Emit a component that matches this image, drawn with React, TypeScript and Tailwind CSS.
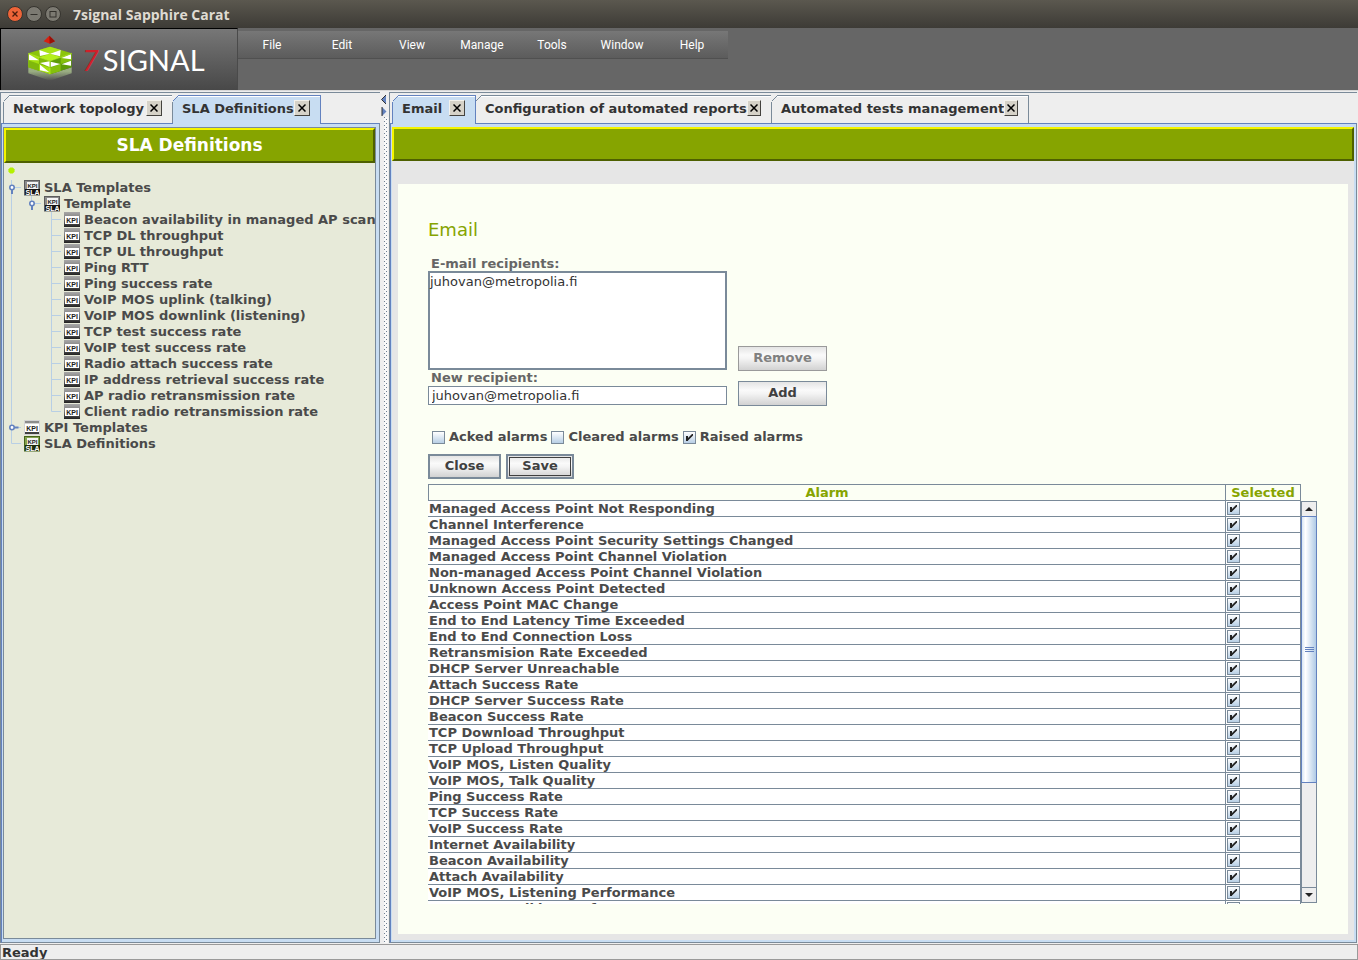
import { useState } from "react";
import type { ReactNode } from "react";

const KPI_NAMES = [
  "Beacon availability in managed AP scan",
  "TCP DL throughput",
  "TCP UL throughput",
  "Ping RTT",
  "Ping success rate",
  "VoIP MOS uplink (talking)",
  "VoIP MOS downlink (listening)",
  "TCP test success rate",
  "VoIP test success rate",
  "Radio attach success rate",
  "IP address retrieval success rate",
  "AP radio retransmission rate",
  "Client radio retransmission rate",
];

const ALARMS = [
  "Managed Access Point Not Responding",
  "Channel Interference",
  "Managed Access Point Security Settings Changed",
  "Managed Access Point Channel Violation",
  "Non-managed Access Point Channel Violation",
  "Unknown Access Point Detected",
  "Access Point MAC Change",
  "End to End Latency Time Exceeded",
  "End to End Connection Loss",
  "Retransmision Rate Exceeded",
  "DHCP Server Unreachable",
  "Attach Success Rate",
  "DHCP Server Success Rate",
  "Beacon Success Rate",
  "TCP Download Throughput",
  "TCP Upload Throughput",
  "VoIP MOS, Listen Quality",
  "VoIP MOS, Talk Quality",
  "Ping Success Rate",
  "TCP Success Rate",
  "VoIP Success Rate",
  "Internet Availability",
  "Beacon Availability",
  "Attach Availability",
  "VoIP MOS, Listening Performance",
  "VoIP MOS, Talking Performance",
];

const MENUS = ["File", "Edit", "View", "Manage", "Tools", "Window", "Help"];

export default function App() {
  return (
    <div className="flex h-screen flex-col overflow-hidden bg-[#eeeeee] font-['DejaVu_Sans',sans-serif] text-[13px] leading-4 font-bold text-[#333333]">
      <TitleBar />
      <Header />
      <div className="flex min-h-0 flex-1 border-t border-[#d8d8d8] pt-px">
        <LeftPane />
        <Splitter />
        <RightPane />
      </div>
      <footer className="mt-px h-[16px] overflow-hidden border border-[#9a9a9a] bg-[#eeeeee] pl-px text-[13px] leading-4">
        Ready
      </footer>
    </div>
  );
}

function TitleBar() {
  return (
    <div className="flex h-7 shrink-0 items-center bg-linear-to-b from-[#5b584f] to-[#3d3b36] pl-[7px]">
      <div className="flex gap-[3px]">
        <WindowButton label="Close window" kind="close" />
        <WindowButton label="Minimize window" kind="min" />
        <WindowButton label="Maximize window" kind="max" />
      </div>
      <span className="ml-3 pt-px font-['Open_Sans',sans-serif] text-[14px] text-[#dfdbd2]">7signal Sapphire Carat</span>
    </div>
  );
}

function WindowButton({ label, kind }: { label: string; kind: "close" | "min" | "max" }) {
  return (
    <button aria-label={label} className="size-4">
      <svg viewBox="0 0 16 16" className="size-4" fill="none">
        <circle cx="8" cy="8" r="7.5" fill={kind === "close" ? "#ee6438" : "#7c7a72"} stroke="#35332e" />
        {kind === "close" && <path d="M5.500 5.500l5 5M10.500 5.500l-5 5" stroke="#4a1c0c" strokeWidth="1.300" />}
        {kind === "min" && <path d="M4.500 8.500h7" stroke="#33312c" />}
        {kind === "max" && <rect x="5" y="5.500" width="6" height="5.500" stroke="#33312c" />}
      </svg>
    </button>
  );
}

function Header() {
  return (
    <header className="flex h-[62px] shrink-0 bg-[#666666]">
      <div className="flex w-[238px] items-start border-t border-l border-r border-t-black border-l-black border-r-[#4a4a4a] bg-linear-to-b from-[#777777] to-[#484848] pt-[6px] pl-[26px]">
        <LogoCube />
        <div className="ml-[9px] flex items-baseline pt-[11px] font-['Lato',sans-serif] text-[29px] leading-7 font-normal">
          <span className="text-[#d0202a] italic">7</span>
          <span className="ml-1 text-white">SIGNAL</span>
        </div>
      </div>
      <nav className="mt-[3px] flex h-7 w-[490px] border-b border-[#505050] bg-linear-to-b from-[#777777] to-[#5c5c5c]">
        {MENUS.map((menu) => (
          <button key={menu} className="flex-1 pr-[2px] font-['Roboto',sans-serif] text-[12px] leading-4 font-normal text-white">
            {menu}
          </button>
        ))}
      </nav>
    </header>
  );
}

function LogoCube() {
  return (
    <svg viewBox="21 15 138 138" className="size-[46px]">
      <defs>
        <linearGradient id="glow" x1="0" y1="0" x2="0" y2="1">
          <stop offset="0.300" stopColor="#c8e8a0" stopOpacity="0.6" />
          <stop offset="1" stopColor="#c8e8a0" stopOpacity="0" />
        </linearGradient>
      </defs>
      <path d="M25 112L90 133L155 112V130L90 152L25 130Z" fill="url(#glow)" />
      <path d="M88 17L105 34L89 41L71 34Z" fill="#d82010" />
      <path d="M88 17L105 34L89 41Z" fill="#981008" />
      {/* top face */}
      <path d="M90 50L155 70L90 93L25 70Z" fill="#8cc40c" />
      <path d="M90 50L122 60L90 71L58 60Z" fill="#a8e414" />
      <path d="M90 71L122 82L90 93L58 82Z" fill="#b4f01c" />
      <path d="M58 60L90 71L60 78Z M122 60L90 71L120 79Z" fill="#ffffff" />
      {/* left face */}
      <path d="M25 70L90 93V133L25 112Z" fill="#a4e010" />
      <path d="M57 81L90 93V113L57 102Z M25 91L57 102V123L25 112Z" fill="#80b80c" />
      <path d="M27 73L57 91L27 90Z M60 99L89 94V111Z M60 104L88 127L60 121Z" fill="#ffffff" />
      {/* right face */}
      <path d="M155 70L90 93V133L155 112Z" fill="#5e9c08" />
      <path d="M122 82L155 70V91L122 102Z M90 113L122 102V123L90 133Z" fill="#84c00c" />
      <path d="M92 95L121 102L92 111Z M124 84L153 73V88Z M125 103L153 92V107Z" fill="#ffffff" />
      <path d="M25 70L90 93L155 70M90 93V133" fill="none" stroke="#b8f028" strokeWidth="2" />
    </svg>
  );
}

function Tab({ title, width, active = false, first = false }: { title: string; width: string; active?: boolean; first?: boolean }) {
  const line = active ? "#6382bf" : "#7a8a99";
  return (
    <div
      className={`relative flex shrink-0 items-center justify-between border-t border-r pr-[10px] pl-[9px] ${width} ${first ? "border-l" : ""} ${
        active ? "z-10 -mb-px h-[29px] border-[#6382bf] bg-[#c8ddf2] pb-[4px] inset-shadow-[0_1px_0_#ffffff]" : "h-[28px] border-[#7a8a99] bg-[#eeeeee] pb-[3px] inset-shadow-[0_1px_0_#ffffff]"
      }`}
    >
      {/* cut corner */}
      <svg viewBox="0 0 7 7" className="absolute -top-px -left-px size-[7px]" shapeRendering="crispEdges">
        <path d="M0 0H7L0 7Z" fill="#eeeeee" />
        <path d="M0.500 6.500L6.500 0.500" stroke={line} />
      </svg>
      <button className="pt-[2px] whitespace-nowrap">{title}</button>
      <button aria-label={`Close ${title}`} className="flex size-4 items-center justify-center border border-t-[#f4f2ec] border-l-[#f4f2ec] border-r-[#44423e] border-b-[#44423e] bg-[#d6d2c8]">
        <svg viewBox="0 0 8 8" className="size-2" stroke="#000000" strokeWidth="1.500">
          <path d="M0.500 0.500L7.500 7.500M7.500 0.500L0.500 7.500" />
        </svg>
      </button>
    </div>
  );
}

function Banner({ height, children }: { height: string; children?: ReactNode }) {
  return (
    <div className={`${height} shrink-0 border-2 border-t-[#f4f400] border-l-[#f4f400] border-r-[#4e6000] border-b-[#4e6000] bg-[#86a400] text-center text-[17px] leading-[30px] text-white`}>
      {children}
    </div>
  );
}

function LeftPane() {
  return (
    <section className="flex w-[380px] shrink-0 flex-col border-t border-l border-[#7a8a99]">
      <div className="flex shrink-0 pt-[2px] pl-[2px]">
        <Tab title="Network topology" width="w-[170px]" first />
        <Tab title="SLA Definitions" width="w-[148px]" active />
      </div>
      <div className="flex min-h-0 flex-1 flex-col border border-t-[#6382bf] border-l-[#6382bf] border-r-[#7a8a99] border-b-[#7a8a99] bg-[#c8ddf2] pt-[3px] pr-[3px] pb-[3px] pl-px">
        <div className="flex min-h-0 flex-1 flex-col border border-[#7a8a99] bg-[#e7ead9]">
          <Banner height="h-[35px]">SLA Definitions</Banner>
          <Tree />
        </div>
      </div>
    </section>
  );
}

function TreeRow({ label, icon, guide }: { label: string; icon: "kpi" | "sla" | "slaGreen" | "kpiLight"; guide: ReactNode }) {
  return (
    <li className="flex h-4 items-center text-[#4a4a4a]">
      {guide}
      <KpiIcon kind={icon} />
      <span className="ml-1 whitespace-nowrap">{label}</span>
    </li>
  );
}

function Tree() {
  return (
    <div className="flex-1 overflow-hidden pt-1">
      <svg viewBox="0 0 8 8" className="ml-1 size-[7px]">
        <path d="M2.500 0.500H5.500L7.500 2.500V5.500L5.500 7.500H2.500L0.500 5.500V2.500Z" fill="#b4f000" />
      </svg>
      <ul className="pt-[6px]">
        <TreeRow
          label="SLA Templates"
          icon="sla"
          guide={
            <svg viewBox="0 0 20 16" className="h-4 w-5 shrink-0" fill="none">
              <path d="M7.500 0V16M10 7.500H17" stroke="#b8cfe5" />
              <Handle x={7.5} open />
            </svg>
          }
        />
        <TreeRow
          label="Template"
          icon="sla"
          guide={
            <svg viewBox="0 0 40 16" className="h-4 w-10 shrink-0" fill="none">
              <path d="M7.500 0V16M27.500 0V8M30 7.500H37" stroke="#b8cfe5" />
              <Handle x={27.5} open />
            </svg>
          }
        />
        {KPI_NAMES.map((name, i) => (
          <TreeRow
            key={name}
            label={name}
            icon="kpi"
            guide={
              <svg viewBox="0 0 60 16" className="h-4 w-[60px] shrink-0" fill="none">
                <path d={i === KPI_NAMES.length - 1 ? "M7.500 0V16M47.500 0V7.500H57" : "M7.500 0V16M47.500 0V16M47.500 7.500H57"} stroke="#b8cfe5" />
              </svg>
            }
          />
        ))}
        <TreeRow
          label="KPI Templates"
          icon="kpiLight"
          guide={
            <svg viewBox="0 0 20 16" className="h-4 w-5 shrink-0" fill="none">
              <path d="M7.500 0V16M10 7.500H17" stroke="#b8cfe5" />
              <Handle x={7.5} />
            </svg>
          }
        />
        <TreeRow
          label="SLA Definitions"
          icon="slaGreen"
          guide={
            <svg viewBox="0 0 20 16" className="h-4 w-5 shrink-0" fill="none">
              <path d="M7.500 0V7.500H17" stroke="#b8cfe5" />
            </svg>
          }
        />
      </ul>
    </div>
  );
}

function Handle({ x, open = false }: { x: number; open?: boolean }) {
  return (
    <>
      <path d={open ? `M${x + 0.5} 9V14` : `M${x + 2} 7.500H${x + 7}`} stroke="#6382bf" strokeWidth="2" />
      <circle cx={x + 0.5} cy="7.500" r="2.200" fill="#ffffff" stroke="#6382bf" strokeWidth="1.600" />
    </>
  );
}

function KpiIcon({ kind }: { kind: "kpi" | "sla" | "slaGreen" | "kpiLight" }) {
  const font = "'Liberation Sans', sans-serif";
  if (kind === "kpi") {
    return (
      <svg viewBox="0 0 16 16" className="size-4 shrink-0">
        <defs>
          <linearGradient id="kpi-frame" x1="0" y1="0" x2="0" y2="1">
            <stop offset="0" stopColor="#a8a8a8" />
            <stop offset="0.500" stopColor="#787878" />
            <stop offset="1" stopColor="#202020" />
          </linearGradient>
        </defs>
        <rect y="0" width="16" height="15" fill="url(#kpi-frame)" />
        <rect x="1" y="4" width="14" height="8" fill="#ffffff" />
        <text x="8" y="10.500" textAnchor="middle" fontFamily={font} fontSize="7" fontWeight="bold" fill="#222222">
          KPI
        </text>
      </svg>
    );
  }
  if (kind === "kpiLight") {
    return (
      <svg viewBox="0 0 16 16" className="size-4 shrink-0">
        <rect width="16" height="15" fill="#d4d4d4" />
        <rect x="1" y="1" width="14" height="2" fill="#8c8c8c" />
        <rect x="1" y="4" width="14" height="8" fill="#ffffff" />
        <rect x="1" y="12" width="14" height="2" fill="#404040" />
        <text x="8" y="10.500" textAnchor="middle" fontFamily={font} fontSize="7" fontWeight="bold" fill="#222222">
          KPI
        </text>
      </svg>
    );
  }
  const green = kind === "slaGreen";
  return (
    <svg viewBox="0 0 16 16" className="size-4 shrink-0">
      <rect x="0.500" y="0.500" width="15" height="14.500" fill={green ? "#84a450" : "#8c8c8c"} stroke={green ? "#46641a" : "#5c5c5c"} />
      <rect x="3" y="2" width="11" height="7" fill="#f4f4f4" />
      <rect x="1" y="9" width="15" height="6" fill={green ? "#1c2c0c" : "#141414"} />
      <text x="8.500" y="8" textAnchor="middle" fontFamily={font} fontSize="6" fontWeight="bold" fill="#222222">
        KPI
      </text>
      <text x="8.500" y="15" textAnchor="middle" fontFamily={font} fontSize="7" fontWeight="bold" fill="#ffffff">
        SLA
      </text>
    </svg>
  );
}

function Splitter() {
  return (
    <div className="flex w-[9px] shrink-0 flex-col bg-[#eeeeee]">
      <svg viewBox="0 0 9 25" className="h-[25px] w-[9px] shrink-0">
        <path d="M6 3V12L1.500 7.500Z" fill="#6382bf" />
        <path d="M6 3L1.500 7.500L6 12" fill="none" stroke="#333333" />
        <path d="M2 15V24L6.500 19.500Z" fill="#6382bf" />
        <path d="M2 15V24" fill="none" stroke="#333333" />
      </svg>
      <svg className="w-[9px] flex-1">
        <defs>
          <pattern id="bumps" width="4" height="4" patternUnits="userSpaceOnUse">
            <rect width="4" height="4" fill="#f8f8f8" />
            <rect x="0" y="0" width="1" height="1" fill="#6e7f92" />
            <rect x="2" y="2" width="1" height="1" fill="#6e7f92" />
          </pattern>
        </defs>
        <rect x="4" width="4" height="100%" fill="url(#bumps)" />
      </svg>
    </div>
  );
}

function RightPane() {
  return (
    <section className="mr-px flex min-w-0 flex-1 flex-col border-t border-l border-[#7a8a99]">
      <div className="flex shrink-0 pt-[2px] pl-[2px]">
        <Tab title="Email" width="w-[84px]" active first />
        <Tab title="Configuration of automated reports" width="w-[296px]" />
        <Tab title="Automated tests management" width="w-[257px]" />
      </div>
      <div className="flex min-h-0 flex-1 flex-col border border-t-[#6382bf] border-l-[#6382bf] border-r-[#7a8a99] border-b-[#7a8a99] bg-[#c8ddf2] pt-[3px] pr-[2px] pb-[2px] pl-px">
        <Banner height="h-[34px]" />
        <div className="flex min-h-0 flex-1 bg-[#e6e6e6] px-[6px] pt-[23px] pb-[6px]">
          <EmailForm />
        </div>
      </div>
    </section>
  );
}

function Check({ id, label, checked, onChange }: { id: string; label?: string; checked: boolean; onChange: () => void }) {
  return (
    <span className="relative block size-[13px] shrink-0">
      <input
        id={id}
        type="checkbox"
        aria-label={label}
        checked={checked}
        onChange={onChange}
        className="block size-[13px] appearance-none border border-[#7a8a99] bg-linear-to-b from-[#ffffff] to-[#b8cfe5]"
      />
      {checked && (
        <svg viewBox="0 0 13 13" className="pointer-events-none absolute inset-0 size-[13px]" fill="#222222">
          <path d="M3 5H5V7L9 3H10V4.500L5 9.500V10H3Z" />
        </svg>
      )}
    </span>
  );
}

function MetalButton({ children, className = "", disabled = false }: { children: ReactNode; className?: string; disabled?: boolean }) {
  return (
    <button
      disabled={disabled}
      className={`h-[25px] bg-[linear-gradient(#e4e4e4,#fafafa_35%,#f4f4f4_50%,#d2d2d2)] pb-px text-center text-[#404040] disabled:border-[#9a9a9a] disabled:text-[#808080] ${className}`}
    >
      {children}
    </button>
  );
}

function EmailForm() {
  const [address, setAddress] = useState("juhovan@metropolia.fi");
  const [filters, setFilters] = useState([
    { id: "acked", label: "Acked alarms", on: false },
    { id: "cleared", label: "Cleared alarms", on: false },
    { id: "raised", label: "Raised alarms", on: true },
  ]);

  const toggle = (id: string) => setFilters(filters.map((f) => (f.id === id ? { ...f, on: !f.on } : f)));

  return (
    <main className="flex min-w-0 flex-1 flex-col bg-[#fcfff4] pt-[34px] pr-[31px] pb-[30px] pl-[30px]">
      <h1 className="text-[18px] leading-6 font-normal text-[#86a400]">Email</h1>

      <div className="mt-[14px] flex items-end gap-[11px]">
        <div className="flex w-[299px] flex-col pb-px">
          <span id="recipients-label" className="pl-[3px] text-[#666666]">E-mail recipients:</span>
          <ul aria-labelledby="recipients-label" className="mt-[-1px] h-[99px] border-2 border-[#7a8a99] bg-white pt-px font-normal">
            <li>juhovan@metropolia.fi</li>
          </ul>
          <label htmlFor="new-recipient" className="pl-[3px] text-[#666666]">New recipient:</label>
          <input
            id="new-recipient"
            value={address}
            onChange={(e) => setAddress(e.target.value)}
            className="h-[19px] border border-[#7a8a99] bg-white px-[3px] font-normal outline-none"
          />
        </div>
        <div className="flex w-[89px] flex-col gap-[10px]">
          <MetalButton disabled className="border border-[#7a8a99]">Remove</MetalButton>
          <MetalButton className="border border-[#7a8a99]">Add</MetalButton>
        </div>
      </div>

      <div className="mt-[23px] flex gap-1 pl-1 text-[#4a4a4a]">
        {filters.map((f) => (
          <span key={f.id} className="flex h-4 items-center gap-1">
            <Check id={f.id} checked={f.on} onChange={() => toggle(f.id)} />
            <label htmlFor={f.id}>{f.label}</label>
          </span>
        ))}
      </div>

      <div className="mt-[9px] flex gap-[5px]">
        <MetalButton className="w-[73px] border-2 border-[#7a8a99]">Close</MetalButton>
        <MetalButton className="w-[68px] border-2 border-[#7a8a99] outline outline-offset-[-4px] outline-[#404040]">Save</MetalButton>
      </div>

      <AlarmTable />
    </main>
  );
}

function AlarmTable() {
  const [selected, setSelected] = useState(ALARMS.map(() => true));

  return (
    <div className="mt-[5px] flex min-h-0 flex-1">
      <div className="min-w-0 flex-1 overflow-y-auto [scrollbar-width:none]">
        <table className="w-full table-fixed border-separate border-spacing-0 text-left">
          <thead>
            <tr className="text-center text-[#86a400]">
              <th className="sticky top-0 z-10 h-[17px] border border-[#7a8a99] bg-[#fcfff4] p-0 leading-[15px]">Alarm</th>
              <th className="sticky top-0 z-10 h-[17px] w-[75px] border border-l-0 border-[#7a8a99] bg-[#fcfff4] p-0 leading-[15px]">Selected</th>
            </tr>
          </thead>
          <tbody className="text-[#4a4a4a]">
            {ALARMS.map((alarm, i) => (
              <tr key={alarm} className="bg-white">
                <td className="h-4 border-r border-b border-[#7a8a99] p-0 pl-px leading-[15px]">{alarm}</td>
                <td className="h-4 border-r border-b border-[#7a8a99] p-0 pl-px">
                  <Check
                    id={`alarm-${i}`}
                    label={alarm}
                    checked={selected[i]}
                    onChange={() => setSelected(selected.map((s, k) => (k === i ? !s : s)))}
                  />
                </td>
              </tr>
            ))}
          </tbody>
        </table>
      </div>
      <ScrollBar />
    </div>
  );
}

function ScrollBar() {
  return (
    <div className="mt-[17px] mb-px flex w-4 shrink-0 flex-col border border-[#7a8a99] bg-[#eeeeee]">
      <button aria-label="Scroll up" className="flex h-[14px] shrink-0 items-center justify-center">
        <svg viewBox="0 0 8 4" className="h-1 w-2"><path d="M0 4L4 0L8 4Z" fill="#222222" /></svg>
      </button>
      <div className="flex min-h-0 flex-1 flex-col">
        <div className="-mx-px flex h-[72%] flex-col items-center justify-center gap-px border border-[#6382bf] bg-linear-to-r from-[#d8e6f4] via-[#ffffff] via-25% to-[#b0cbe6]">
          <span className="h-px w-[9px] bg-[#6382bf]" />
          <span className="h-px w-[9px] bg-[#6382bf]" />
          <span className="h-px w-[9px] bg-[#6382bf]" />
        </div>
      </div>
      <button aria-label="Scroll down" className="flex h-[15px] shrink-0 items-center justify-center border-t border-[#7a8a99]">
        <svg viewBox="0 0 8 4" className="h-1 w-2"><path d="M0 0H8L4 4Z" fill="#222222" /></svg>
      </button>
    </div>
  );
}
